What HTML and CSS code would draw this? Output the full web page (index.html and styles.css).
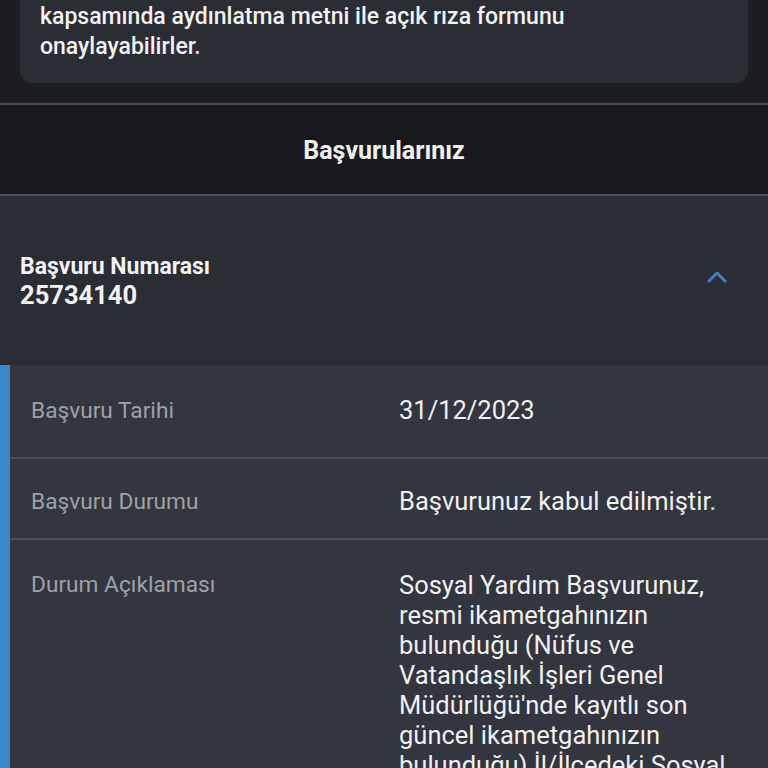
FILE: index.html
```
<!DOCTYPE html>
<html lang="tr">
<head>
<meta charset="utf-8">
<link rel="stylesheet" href="styles.css">
</head>
<body>
<div class="page">
  <div class="notice">
    <p>kapsamında aydınlatma metni ile açık rıza formunu onaylayabilirler.</p>
  </div>
  <div class="title-bar">Başvurularınız</div>
  <div class="app-head">
    <div class="app-id">
      <div class="app-label">Başvuru Numarası</div>
      <div class="app-num">25734140</div>
    </div>
    <svg class="chev" width="22" height="14" viewBox="0 0 22 14"><polyline points="3,11 11,3 19,11" fill="none" stroke="#3f80c4" stroke-width="3" stroke-linecap="round" stroke-linejoin="round"/></svg>
  </div>
  <div class="details">
    <div class="row row-first">
      <div class="lbl">Başvuru Tarihi</div>
      <div class="val">31/12/2023</div>
    </div>
    <div class="row row-mid">
      <div class="lbl">Başvuru Durumu</div>
      <div class="val">Başvurunuz kabul edilmiştir.</div>
    </div>
    <div class="row row-last">
      <div class="lbl">Durum Açıklaması</div>
      <div class="val">Sosyal Yardım Başvurunuz, resmi ikametgahınızın bulunduğu (Nüfus ve Vatandaşlık İşleri Genel Müdürlüğü'nde kayıtlı son güncel ikametgahınızın bulunduğu) İl/İlçedeki Sosyal Yardımlaşma ve Dayanışma Vakfına iletilmiştir.</div>
    </div>
  </div>
</div>
</body>
</html>
```
FILE: styles.css
```
html, body {
  margin: 0;
  padding: 0;
  background: #1c1d22;
  overflow: hidden;
}
.page {
  width: 768px;
  height: 768px;
  overflow: hidden;
  font-family: Roboto, "Noto Sans", sans-serif;
  color: #f2f2f2;
  background: #1c1d22;
}
.notice {
  margin: -20px 20px 0;
  background: #2a2d34;
  border-radius: 0 0 12px 12px;
  padding: 22px 20px 21px;
}
.notice p {
  margin: 0;
  font-size: 23px;
  line-height: 30px;
  font-weight: 500;
  width: 600px;
}
.title-bar {
  margin-top: 20px;
  border-top: 2px solid #4a4d53;
  border-bottom: 2px solid #4e5158;
  background: #18191d;
  box-sizing: border-box;
  height: 93px;
  padding-top: 1px;
  display: flex;
  align-items: center;
  justify-content: center;
  font-size: 25px;
  font-weight: 700;
}
.app-head {
  background: #2a2d34;
  height: 169px;
  display: flex;
  align-items: center;
  justify-content: space-between;
  padding: 0 40px 0 20px;
}
.app-id {
  padding-top: 2px;
}
.app-label {
  font-size: 23px;
  font-weight: 700;
  line-height: 28px;
}
.app-num {
  font-size: 25.5px;
  font-weight: 700;
  line-height: 29px;
}
.chev {
  margin-top: -8px;
}
.details {
  background: #33363e;
  border-left: 10px solid #3d87cb;
}
.row {
  display: grid;
  grid-template-columns: 368px 1fr;
  padding: 28px 20px 22px 21px;
  border-bottom: 2px solid #4a4d55;
}
.row-first {
  padding-top: 31px;
  padding-bottom: 32px;
}
.row-last {
  padding-top: 30px;
  border-bottom: none;
}
.lbl {
  font-size: 22.7px;
  line-height: 29px;
  color: #9ea1a7;
}
.val {
  font-size: 25.5px;
  line-height: 29px;
  color: #f0f0f0;
}
.row-last .lbl,
.row-last .val {
  line-height: 30px;
}
```
